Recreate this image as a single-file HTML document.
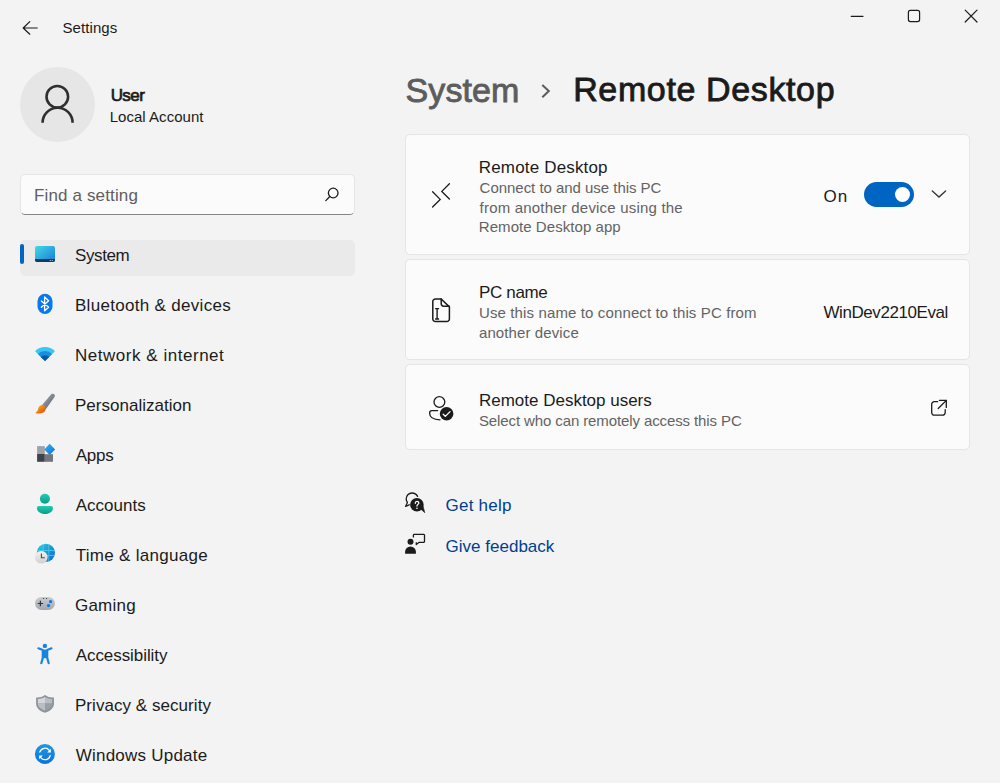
<!DOCTYPE html>
<html><head><meta charset="utf-8"><title>Settings</title>
<style>
html,body{margin:0;padding:0;}
body{width:1000px;height:783px;overflow:hidden;background:#f3f3f3;position:relative;font-family:"Liberation Sans",sans-serif;}
.t{position:absolute;white-space:nowrap;}
.a{position:absolute;}
.card{position:absolute;left:405px;width:563px;background:#fbfbfb;border:1px solid #e5e5e5;border-radius:5px;}
svg{position:absolute;overflow:visible;}
</style></head><body>
<!-- avatar -->
<div class="a" style="left:20px;top:67px;width:75px;height:75px;border-radius:50%;background:#e6e6e6"></div>
<!-- search box -->
<div class="a" style="left:20px;top:174px;width:333px;height:39px;background:#fbfbfb;border:1px solid #e5e5e5;border-bottom:1px solid #868686;border-radius:5px"></div>
<!-- nav selected -->
<div class="a" style="left:20px;top:240px;width:335px;height:36px;background:#eaeaea;border-radius:5px"></div>
<div class="a" style="left:20px;top:244px;width:4px;height:20px;background:#0064c2;border-radius:2px"></div>
<!-- cards -->
<div class="card" style="top:134px;height:119px"></div>
<div class="card" style="top:259px;height:99px"></div>
<div class="card" style="top:364px;height:84px"></div>
<!-- toggle -->
<div class="a" style="left:864px;top:182px;width:50px;height:25px;border-radius:13px;background:#0064c2"></div>
<div class="a" style="left:895px;top:187px;width:15px;height:15px;border-radius:50%;background:#fff"></div>
<svg width="1000" height="783" viewBox="0 0 1000 783" style="left:0;top:0">
<defs>
<linearGradient id="gSys" x1="0" y1="0" x2="1" y2="1"><stop offset="0" stop-color="#3fdbe6"/><stop offset="1" stop-color="#1a78d8"/></linearGradient>
<linearGradient id="gBrush" x1="0" y1="0" x2="1" y2="1"><stop offset="0" stop-color="#aab0b8"/><stop offset="1" stop-color="#545c66"/></linearGradient>
<linearGradient id="gTip" x1="0" y1="0" x2="1" y2="1"><stop offset="0" stop-color="#ffc21a"/><stop offset="1" stop-color="#e0400a"/></linearGradient>
<linearGradient id="gDia" x1="0" y1="0" x2="1" y2="1"><stop offset="0" stop-color="#2ab8f4"/><stop offset="1" stop-color="#0a6fdc"/></linearGradient>
<linearGradient id="gAcc" x1="0" y1="0" x2="0" y2="1"><stop offset="0" stop-color="#22ccb4"/><stop offset="1" stop-color="#0b9a8a"/></linearGradient>
<linearGradient id="gGlobe" x1="0" y1="0" x2="1" y2="1"><stop offset="0" stop-color="#2ed0e0"/><stop offset="1" stop-color="#0a64cc"/></linearGradient>
<linearGradient id="gClock" x1="0" y1="0" x2="0" y2="1"><stop offset="0" stop-color="#f4f4f4"/><stop offset="1" stop-color="#cfcfcf"/></linearGradient>
<linearGradient id="gPad" x1="0" y1="0" x2="0" y2="1"><stop offset="0" stop-color="#c8ccd2"/><stop offset="1" stop-color="#a4a8b0"/></linearGradient>
<linearGradient id="gUpd" x1="0" y1="0" x2="0" y2="1"><stop offset="0" stop-color="#2296e4"/><stop offset="1" stop-color="#0a74d8"/></linearGradient>
</defs>
<g fill="none" stroke="#1b1b1b" stroke-width="1.2" stroke-linecap="round" stroke-linejoin="round">
 <!-- back arrow -->
 <path d="M37.2 28H23.2M29.8 21.6L23.2 28L29.8 34.2"/>
 <!-- window controls -->
 <path d="M851.2 16.3H863"/>
 <rect x="908.4" y="10.4" width="11.2" height="11.2" rx="2"/>
 <path d="M965.2 10.2L977 22M977 10.2L965.2 22"/>
 <!-- search -->
 <circle cx="333.2" cy="193" r="4.8" stroke-width="1.3"/>
 <path d="M329.8 196.5L325.8 200.6" stroke-width="1.3"/>
</g>
<!-- avatar person -->
<g fill="none" stroke="#2f2f2f" stroke-width="2.6">
 <circle cx="57.3" cy="96.8" r="10.8"/>
 <path d="M42.6 122.8A15 15 0 0 1 72.6 122.8"/>
</g>
<!-- title chevron -->
<path d="M542.3 84.9L548.8 91L542.3 97.2" fill="none" stroke="#5c5c5c" stroke-width="2"/>

<!-- nav: System -->
<rect x="35" y="246" width="20" height="16" rx="2" fill="url(#gSys)"/>
<path d="M35 259H55V260A2 2 0 0 1 53 262H37A2 2 0 0 1 35 260Z" fill="#0b3b64"/>
<circle cx="50.3" cy="260.5" r="0.6" fill="#cfe6f5"/><circle cx="52.3" cy="260.5" r="0.6" fill="#cfe6f5"/>
<!-- Bluetooth -->
<rect x="37.5" y="293.8" width="15" height="20.2" rx="7.5" fill="#0a78ec"/>
<path d="M41.4 300.9L48.6 307.3L44.6 310.8V297L48.6 300.7L41.4 307.2" fill="none" stroke="#fff" stroke-width="1.3" stroke-linejoin="round" stroke-linecap="round"/>
<!-- Network wifi -->
<path d="M45 361L35.1 351.2A14 14 0 0 1 54.9 351.2Z" fill="#38c6f2"/>
<path d="M45 361L37.9 354A10 10 0 0 1 52.1 354Z" fill="#1a8fde"/>
<path d="M45 361L40.8 356.9A6 6 0 0 1 49.2 356.9Z" fill="#0c58a8"/>
<!-- Personalization brush -->
<path d="M51.2 394.3C52.4 393.3 54.6 393.9 54.9 395.6C55 396.2 54.8 396.6 54.5 397L45.6 409.4L41.2 405.9Z" fill="url(#gBrush)"/>
<path d="M41.6 405.2C44.2 405 46.2 407.4 45.4 410C44.4 412.8 40.6 414.4 35.3 412.9C37.6 411.7 37.8 410 38.2 408.6C38.8 406.4 40 405.3 41.6 405.2Z" fill="url(#gTip)"/>
<!-- Apps -->
<rect x="37.1" y="446.1" width="7.7" height="7.9" fill="#9da1a9"/>
<rect x="37.1" y="454" width="7.7" height="7.8" fill="#3f4349"/>
<rect x="44.8" y="454.2" width="8.2" height="7.6" fill="#72767e"/>
<path d="M49.6 443.8L55.1 449.4L49.6 455L44.2 449.4Z" fill="url(#gDia)"/>
<!-- Accounts -->
<circle cx="44.9" cy="498.8" r="5" fill="url(#gAcc)"/>
<path d="M38.9 505.9H51A2 2 0 0 1 53 507.9C53 511.5 49.5 514 45 514C40.5 514 36.9 511.5 36.9 507.9A2 2 0 0 1 38.9 505.9Z" fill="url(#gAcc)"/>
<!-- Time & language -->
<circle cx="45.9" cy="552.8" r="9.1" fill="url(#gGlobe)"/>
<g stroke="#5fd8f0" stroke-width="0.8" fill="none" opacity="0.8">
 <path d="M37 550.5H54.8M37 555.5H54.8"/>
 <path d="M43.2 544V561.5M48.8 544V561.5"/>
</g>
<circle cx="41.3" cy="557.2" r="6.3" fill="url(#gClock)"/>
<path d="M41.4 553.4V557.8H44.8" fill="none" stroke="#4a4a4a" stroke-width="1.1"/>
<!-- Gaming -->
<rect x="35" y="596.9" width="19.9" height="13" rx="6.5" fill="url(#gPad)"/>
<path d="M40.4 600.8V606.2M37.7 603.5H43.1" stroke="#333" stroke-width="1.2"/>
<circle cx="50.6" cy="601.6" r="1.6" fill="#0a78e0"/><circle cx="48.5" cy="605.6" r="1.6" fill="#0a78e0"/>
<circle cx="43.5" cy="598.5" r="0.6" fill="#333"/><circle cx="46.5" cy="598.5" r="0.6" fill="#333"/>
<!-- Accessibility -->
<circle cx="44.9" cy="645.9" r="2.2" fill="#1784de"/>
<path d="M38.4 648.3L42.8 650V657.8L41.3 663.2M51.5 648.3L47.2 650V657.8L48.7 663.2" fill="none" stroke="#1784de" stroke-width="2.2" stroke-linecap="round" stroke-linejoin="round"/>
<rect x="42.2" y="649.6" width="5.6" height="8.6" fill="#1784de"/>
<!-- Privacy shield -->
<path d="M45 695C47.5 697 50.5 697.6 54 697.4V703.5C54 707.8 50.8 711 45 712.8C39.2 711 36.1 707.8 36.1 703.5V697.4C39.5 697.6 42.5 697 45 695Z" fill="#8f949c"/>
<path d="M45 697C47.2 698.4 49.5 699 52.2 698.9V703.6H45Z" fill="#b9bdc4"/>
<path d="M45 697C42.8 698.4 40.5 699 37.9 698.9V703.6H45Z" fill="#d3d6db"/>
<path d="M37.9 703.6H45V710.8C40.5 709.2 37.9 706.8 37.9 703.6Z" fill="#b9bdc4"/>
<path d="M52.2 703.6H45V710.8C49.5 709.2 52.2 706.8 52.2 703.6Z" fill="#9a9ea6"/>
<!-- Windows Update -->
<circle cx="44.9" cy="754" r="10" fill="url(#gUpd)"/>
<g fill="none" stroke="#fff" stroke-width="1.3" stroke-linecap="round">
 <path d="M39.8 752.2A5.4 5.4 0 0 1 49.3 750.3"/>
 <path d="M50.2 755.6A5.4 5.4 0 0 1 40.7 757.6"/>
</g>
<path d="M50.8 748.8L50.9 752.6L47.2 752.5Z" fill="#fff"/>
<path d="M39.2 759.2L39.1 755.4L42.8 755.5Z" fill="#fff"/>

<!-- card icons -->
<g fill="none" stroke="#1b1b1b" stroke-width="1.3" stroke-linecap="round" stroke-linejoin="miter">
 <path d="M432.6 191.8L440.2 199.4L432.6 207"/>
 <path d="M449.4 183.8L441.8 191.4L449.4 199"/>
 <!-- doc -->
 <path d="M441.2 298.9H435.4A2.6 2.6 0 0 0 432.8 301.5V319A2.6 2.6 0 0 0 435.4 321.6H446.8A2.6 2.6 0 0 0 449.4 319V306.9Z" stroke-width="1.5"/>
 <path d="M441.2 298.9V303.6A2.6 2.6 0 0 0 443.8 306.2H449.2" stroke-width="1.5"/>
 <path d="M437.1 308.6V319M435.1 308.6H439.1M435.1 319H439.1" stroke-width="1.4" stroke-linecap="butt"/>
 <!-- users -->
 <circle cx="439.4" cy="402" r="5.4" stroke-width="1.3"/>
 <path d="M437.6 410.6H431.9A2.4 2.4 0 0 0 429.6 413C429.6 417.2 433.4 419.6 440 419.8" stroke-width="1.3"/>
 <!-- chevron down -->
 <path d="M932.3 190.9L939 197L945.6 190.9" stroke="#333"/>
 <!-- external link -->
 <path d="M937.6 401.7H934.3A2.6 2.6 0 0 0 931.7 404.3V412.6A2.6 2.6 0 0 0 934.3 415.2H942.6A2.6 2.6 0 0 0 945.2 412.6V409.6" stroke-width="1.3"/>
 <path d="M939.4 400.4H946.3V407.4M946.1 400.6L938.2 408.5" stroke-width="1.3"/>
</g>
<circle cx="446.6" cy="413.7" r="6.8" fill="#1b1b1b"/>
<path d="M443.2 414.2L445.3 416.4L450 411.6" fill="none" stroke="#fff" stroke-width="1.3" stroke-linecap="round" stroke-linejoin="round"/>

<!-- get help -->
<path d="M417.6 496.4C416.4 494.2 414.4 493 412 493C408.6 493 406.2 495.8 406.2 499C406.2 500.6 406.8 501.6 407.4 502.4L405.6 506.4L409.2 504.8" fill="none" stroke="#1b1b1b" stroke-width="1.3" stroke-linecap="round" stroke-linejoin="round"/>
<circle cx="416.9" cy="504.8" r="6.8" fill="#1b1b1b"/>
<path d="M420.2 508.6L424.8 512.7L423.2 506.6Z" fill="#1b1b1b" stroke="#1b1b1b" stroke-width="0.6" stroke-linejoin="round"/>
<path d="M415.3 503.3C415.3 502.1 416 501.4 417 501.4C418 501.4 418.8 502.1 418.8 503C418.8 504.3 417 504.5 417 506" fill="none" stroke="#fff" stroke-width="1.3" stroke-linecap="round"/>
<circle cx="417" cy="508.2" r="0.8" fill="#fff"/>
<!-- feedback -->
<circle cx="410.5" cy="541.8" r="3" fill="#1b1b1b"/>
<path d="M405.1 553.7V551.8A5.4 5.2 0 0 1 415.9 551.8V553.7Z" fill="#1b1b1b"/>
<path d="M413.4 537.4V535A0.8 0.8 0 0 1 414.2 534.3H423.8A0.8 0.8 0 0 1 424.5 535V541.5A0.8 0.8 0 0 1 423.8 542.3H419.2L416.3 544.5V542.3" fill="none" stroke="#1b1b1b" stroke-width="1.3" stroke-linejoin="round"/>
</svg>

<div class="t" style="left:62.44px;top:20.10px;font-size:15px;line-height:15px;letter-spacing:0.086px;color:#1b1b1b;">Settings</div>
<div class="t" style="left:110.64px;top:86.81px;font-size:17px;line-height:17px;letter-spacing:-0.567px;color:#1b1b1b;-webkit-text-stroke:0.7px #1b1b1b;">User</div>
<div class="t" style="left:109.68px;top:109.30px;font-size:15px;line-height:15px;letter-spacing:0.033px;color:#1b1b1b;">Local Account</div>
<div class="t" style="left:34.06px;top:187.41px;font-size:17px;line-height:17px;letter-spacing:0.138px;color:#5f5f5f;">Find a setting</div>
<div class="t" style="left:74.96px;top:246.61px;font-size:17px;line-height:17px;letter-spacing:-0.380px;color:#1b1b1b;">System</div>
<div class="t" style="left:74.96px;top:296.61px;font-size:17px;line-height:17px;letter-spacing:0.308px;color:#1b1b1b;">Bluetooth &amp; devices</div>
<div class="t" style="left:74.96px;top:346.61px;font-size:17px;line-height:17px;letter-spacing:0.532px;color:#1b1b1b;">Network &amp; internet</div>
<div class="t" style="left:74.96px;top:396.61px;font-size:17px;line-height:17px;letter-spacing:0.025px;color:#1b1b1b;">Personalization</div>
<div class="t" style="left:75.76px;top:446.61px;font-size:17px;line-height:17px;letter-spacing:-0.250px;color:#1b1b1b;">Apps</div>
<div class="t" style="left:75.76px;top:496.61px;font-size:17px;line-height:17px;letter-spacing:0.007px;color:#1b1b1b;">Accounts</div>
<div class="t" style="left:75.76px;top:546.61px;font-size:17px;line-height:17px;letter-spacing:0.293px;color:#1b1b1b;">Time &amp; language</div>
<div class="t" style="left:74.96px;top:596.61px;font-size:17px;line-height:17px;letter-spacing:0.230px;color:#1b1b1b;">Gaming</div>
<div class="t" style="left:75.76px;top:646.61px;font-size:17px;line-height:17px;letter-spacing:-0.073px;color:#1b1b1b;">Accessibility</div>
<div class="t" style="left:74.96px;top:696.61px;font-size:17px;line-height:17px;letter-spacing:0.053px;color:#1b1b1b;">Privacy &amp; security</div>
<div class="t" style="left:75.76px;top:746.61px;font-size:17px;line-height:17px;letter-spacing:0.222px;color:#1b1b1b;">Windows Update</div>
<div class="t" style="left:405.60px;top:73.02px;font-size:34px;line-height:34px;letter-spacing:0.070px;color:#5c5c5c;-webkit-text-stroke:0.85px #5c5c5c;">System</div>
<div class="t" style="left:573.20px;top:71.72px;font-size:34px;line-height:34px;letter-spacing:0.627px;color:#1b1b1b;-webkit-text-stroke:0.85px #1b1b1b;">Remote Desktop</div>
<div class="t" style="left:478.82px;top:158.61px;font-size:17px;line-height:17px;letter-spacing:0.162px;color:#1b1b1b;">Remote Desktop</div>
<div class="t" style="left:479.62px;top:180.30px;font-size:15px;line-height:15px;letter-spacing:-0.032px;color:#636363;">Connect to and use this PC</div>
<div class="t" style="left:479.62px;top:199.80px;font-size:15px;line-height:15px;letter-spacing:0.193px;color:#636363;">from another device using the</div>
<div class="t" style="left:478.82px;top:218.60px;font-size:15px;line-height:15px;letter-spacing:0.053px;color:#636363;">Remote Desktop app</div>
<div class="t" style="left:823.58px;top:188.31px;font-size:17px;line-height:17px;letter-spacing:1.000px;color:#1b1b1b;">On</div>
<div class="t" style="left:478.96px;top:283.71px;font-size:17px;line-height:17px;letter-spacing:-0.342px;color:#1b1b1b;">PC name</div>
<div class="t" style="left:478.96px;top:305.30px;font-size:15px;line-height:15px;letter-spacing:0.128px;color:#636363;">Use this name to connect to this PC from</div>
<div class="t" style="left:478.96px;top:324.80px;font-size:15px;line-height:15px;letter-spacing:0.108px;color:#636363;">another device</div>
<div class="t" style="left:823.48px;top:303.61px;font-size:17px;line-height:17px;letter-spacing:-0.431px;color:#1b1b1b;">WinDev2210Eval</div>
<div class="t" style="left:478.96px;top:391.61px;font-size:17px;line-height:17px;letter-spacing:-0.005px;color:#1b1b1b;">Remote Desktop users</div>
<div class="t" style="left:478.96px;top:413.30px;font-size:15px;line-height:15px;letter-spacing:-0.108px;color:#636363;">Select who can remotely access this PC</div>
<div class="t" style="left:445.58px;top:496.51px;font-size:17px;line-height:17px;letter-spacing:0.221px;color:#003e92;">Get help</div>
<div class="t" style="left:445.58px;top:538.41px;font-size:17px;line-height:17px;letter-spacing:0.004px;color:#003e92;">Give feedback</div>

</body></html>
